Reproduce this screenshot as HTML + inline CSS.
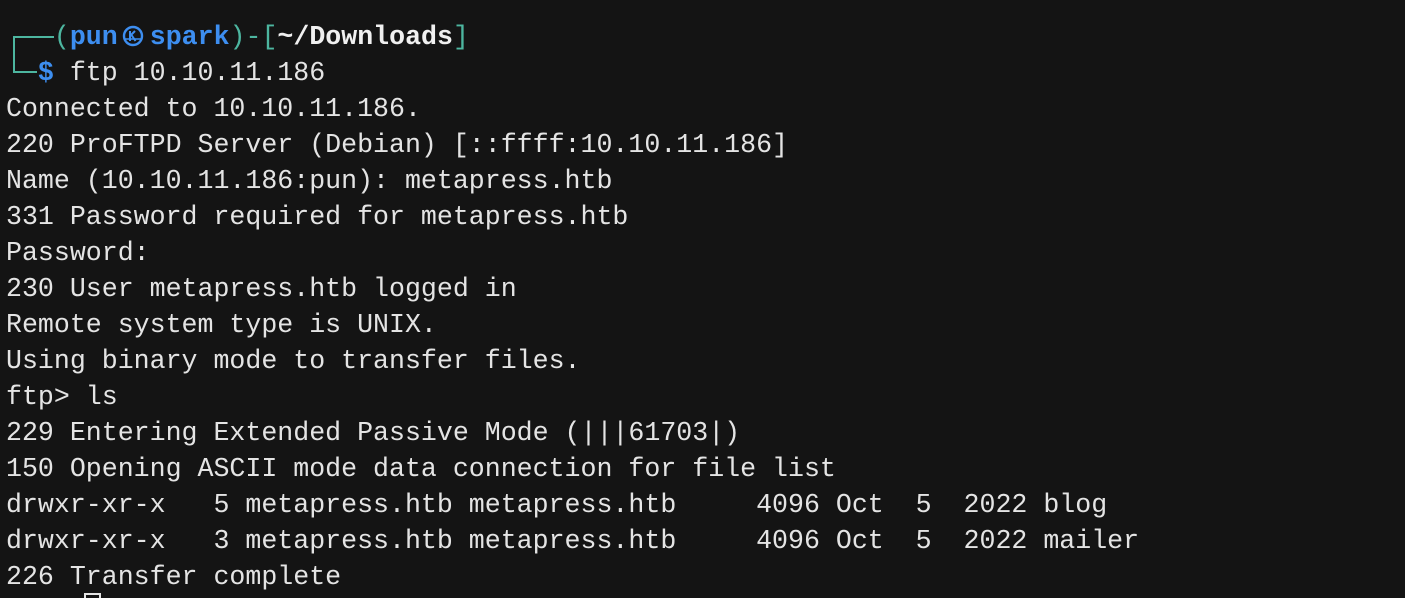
<!DOCTYPE html>
<html><head><meta charset="utf-8"><style>
html,body{margin:0;padding:0;background:#141414;width:1405px;height:598px;overflow:hidden;position:relative}
pre{margin:0;padding:19px 0 0 6px;font-family:"Liberation Mono","DejaVu Sans Mono",monospace;font-size:26.6px;line-height:36px;color:#e4e4e4;white-space:pre}
.t{color:#4db6a0}.b{color:#3d8ef0;font-weight:bold}.w{color:#f0f0f0;font-weight:bold}
.k{display:inline-block;width:32px;height:22px;vertical-align:-3px}
.ln{position:absolute;background:#4db6a0}
</style></head><body>
<div class="ln" style="left:13px;top:36px;width:2px;height:37px"></div>
<div class="ln" style="left:13px;top:36px;width:41px;height:2px"></div>
<div class="ln" style="left:13px;top:71px;width:24px;height:2px"></div>
<pre><span class="t">   (</span><span class="b">pun</span><svg class="k" viewBox="0 0 32 22"><circle cx="15" cy="11" r="9" fill="none" stroke="#3d8ef0" stroke-width="2.4"/><path d="M12 6v10M12 11l5-5M13.5 10l4 6" stroke="#3d8ef0" stroke-width="2" fill="none"/><path d="M6 14h18" stroke="#3d8ef0" stroke-width="1.6"/></svg><span class="b">spark</span><span class="t">)-[</span><span class="w">~/Downloads</span><span class="t">]</span>
  <span class="b">$</span> ftp 10.10.11.186
Connected to 10.10.11.186.
220 ProFTPD Server (Debian) [::ffff:10.10.11.186]
Name (10.10.11.186:pun): metapress.htb
331 Password required for metapress.htb
Password:
230 User metapress.htb logged in
Remote system type is UNIX.
Using binary mode to transfer files.
ftp&gt; ls
229 Entering Extended Passive Mode (|||61703|)
150 Opening ASCII mode data connection for file list
drwxr-xr-x   5 metapress.htb metapress.htb     4096 Oct  5  2022 blog
drwxr-xr-x   3 metapress.htb metapress.htb     4096 Oct  5  2022 mailer
226 Transfer complete</pre>
<div style="position:absolute;left:84px;top:593px;width:17px;height:20px;border:2px solid #e4e4e4;box-sizing:border-box"></div>
</body></html>
